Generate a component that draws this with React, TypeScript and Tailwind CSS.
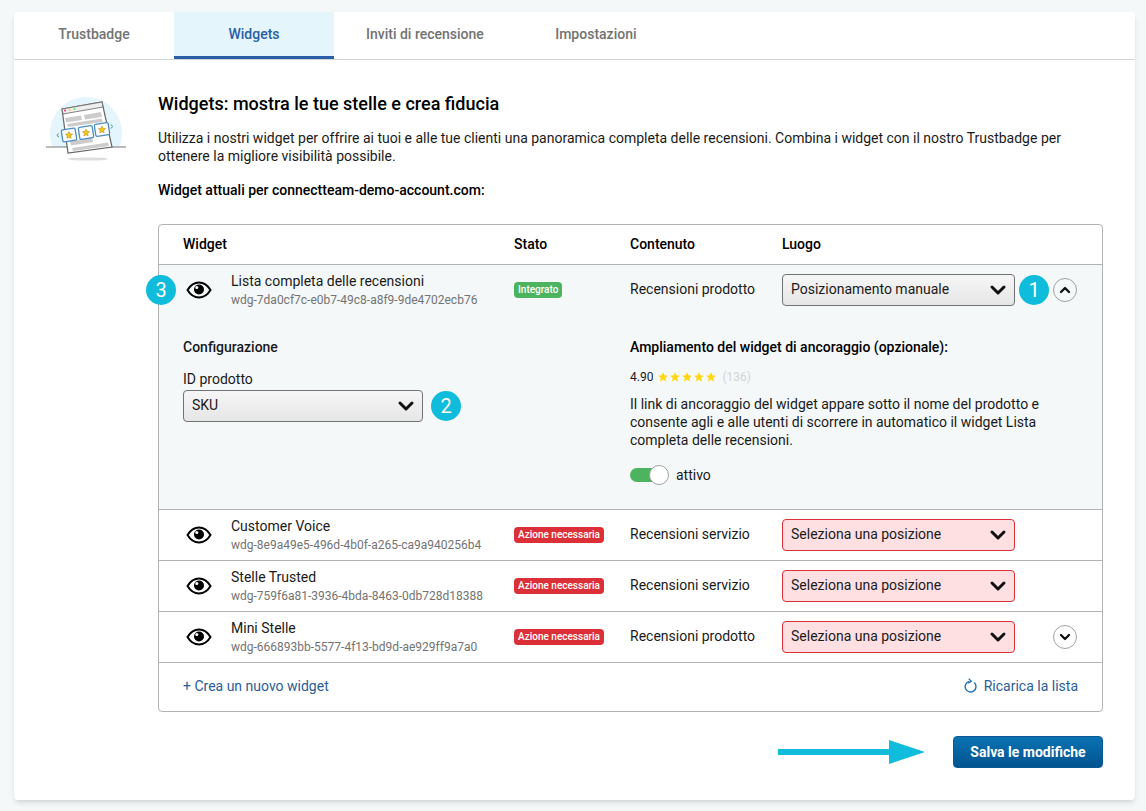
import { ChevronDown, ChevronUp } from "lucide-react";

const gridCols = "grid grid-cols-[331px_116px_152px_1fr]";

const Eye = () => (
  <svg viewBox="0 0 26 20" className="w-7 h-5 shrink-0" fill="none">
    <path d="M1.5 10C4.5 5 8.5 2.5 13 2.5S21.5 5 24.5 10C21.5 15 17.5 17.5 13 17.5S4.5 15 1.5 10Z" stroke="#000" strokeWidth="2" />
    <circle cx="13" cy="9.5" r="5" fill="#000" />
    <circle cx="10.8" cy="7.6" r="1.5" fill="#fff" />
  </svg>
);

const Bubble = ({ n }: { n: number }) => (
  <span className="flex items-center justify-center size-7.5 shrink-0 rounded-full bg-[#0fbcdc] text-xl text-white">{n}</span>
);

const Select = ({ label, error, wide }: { label: string; error?: boolean; wide?: boolean }) => (
  <div className={`flex items-center justify-between shrink-0 h-8 pl-2 pr-1 rounded border ${wide ? "w-60" : "w-[233px]"} ${error ? "border-[#dc3038] bg-[#ffe0e2]" : "border-neutral-500 bg-linear-to-b from-[#f6f6f6] to-[#e6e6e6]"}`}>
    <span className="pb-0.5">{label}</span>
    <ChevronDown className="size-6" strokeWidth={3} color="#111" />
  </div>
);

const Badge = ({ label, ok }: { label: string; ok?: boolean }) => (
  <span className={`inline-block w-fit h-4 px-1 rounded text-[10px] leading-4 font-medium text-white ${ok ? "bg-[#4cb35f]" : "bg-[#dc3038]"}`}>{label}</span>
);

const WidgetName = ({ name, id }: { name: string; id: string }) => (
  <div className="flex items-center gap-4.5 pl-0.5">
    <Eye />
    <div>
      <div className="leading-4.5">{name}</div>
      <div className="mt-0.5 text-xs leading-4 text-neutral-500">{id}</div>
    </div>
  </div>
);

const Row = ({ name, id, content, expand }: { name: string; id: string; content: string; expand?: boolean }) => (
  <div className={`${gridCols} items-center h-[51px] px-6 border-t border-[#b3b3b3]`}>
    <WidgetName name={name} id={id} />
    <Badge label="Azione necessaria" />
    <span className="pb-0.5">{content}</span>
    <div className="flex items-center justify-between">
      <Select label="Seleziona una posizione" error />
      {expand && (
        <span className="flex items-center justify-center size-6 mr-px rounded-full border border-neutral-400">
          <ChevronDown className="size-4" strokeWidth={3.5} color="#111" />
        </span>
      )}
    </div>
  </div>
);

const Illustration = () => (
  <svg viewBox="0 0 112 86" className="w-28 shrink-0 self-start" fill="none">
    <path d="M22.8 63A36 36 0 1 1 89.2 63Z" fill="#e4f5fb" />
    <path d="M16 63H96" stroke="#777" strokeWidth="1" />
    <ellipse cx="58" cy="75" rx="20" ry="1.6" fill="#ddd" />
    <g transform="translate(0 1)">
      <path d="M32 24L72 17L82 62L38 68Z" fill="#fff" stroke="#666" strokeWidth="1.2" />
      <path d="M32 24L72 17L73 22L33 29Z" fill="#eee" stroke="#666" strokeWidth="0.8" />
      <circle cx="35" cy="25.5" r="1" fill="#f27" />
      <circle cx="39.5" cy="24.7" r="1" fill="#fc3" />
      <circle cx="44.5" cy="24" r="1" fill="#6d6" />
      <path d="M35 33L51 30.5L52 35L36 37.5ZM54 30L71 27L72 32L55 34.5ZM37 39L72 33.5L72.5 37L38 42Z" fill="#ccc" />
      <path d="M40 56L62 52.5L63 57L41 60.5ZM42 63L78 57.5L79 61L43 66Z" fill="#ccc" />
      <g fill="#fff" stroke="#4a8cc4" strokeWidth="1.3">
        <rect x="32" y="44" width="14" height="12" rx="1.5" transform="rotate(-9 39 50)" />
        <rect x="49" y="41.5" width="14" height="12" rx="1.5" transform="rotate(-9 56 47.5)" />
        <rect x="65" y="38.5" width="14" height="12" rx="1.5" transform="rotate(-9 72 44.5)" />
      </g>
      <g fill="#f5c518" stroke="#8a7a20" strokeWidth="0.4">
        <path d="M39 46.5l1.1 2.3 2.5.3-1.8 1.8.4 2.5-2.2-1.2-2.2 1.2.4-2.5-1.8-1.8 2.5-.3Z" />
        <path d="M56 44l1.1 2.3 2.5.3-1.8 1.8.4 2.5-2.2-1.2-2.2 1.2.4-2.5-1.8-1.8 2.5-.3Z" />
        <path d="M72 41l1.1 2.3 2.5.3-1.8 1.8.4 2.5-2.2-1.2-2.2 1.2.4-2.5-1.8-1.8 2.5-.3Z" />
      </g>
      <path d="M28.5 48.5L27 50.5L29 52M81 39.5L82.5 41.5L81 43.5" stroke="#4a8cc4" strokeWidth="1" />
    </g>
  </svg>
);

const Star = () => (
  <svg viewBox="0 0 20 20" className="size-2.5" fill="#ffd814">
    <path d="M10 0.5l2.9 6.2 6.7.8-5 4.6 1.4 6.7L10 15.4l-6 3.4 1.4-6.7-5-4.6 6.7-.8Z" />
  </svg>
);

const tabClass = "flex items-center justify-center min-w-40 px-8 border-b-3";

export default function App() {
  return (
    <div className="min-h-screen bg-[#f4f8f9] pt-3 pb-2.5 pl-3.5 text-sm text-[#1a1a1a] font-['Roboto',sans-serif]">
      <div className="w-[1121px] bg-white rounded shadow-md">
        <div className="flex h-12 border-b border-neutral-300 font-medium text-neutral-500">
          <div className={`${tabClass} border-transparent`}>Trustbadge</div>
          <div className={`${tabClass} border-[#2a5ea8] bg-[#e4f5fb] text-[#2a5ea8]`}>Widgets</div>
          <div className={`${tabClass} border-transparent`}>Inviti di recensione</div>
          <div className={`${tabClass} border-transparent`}>Impostazioni</div>
        </div>

        <div className="flex gap-4 pl-4 pr-8 pt-6 pb-8">
          <Illustration />
          <div className="flex-1 min-w-0 pt-2">
            <h1 className="pb-px text-lg leading-6 font-medium text-black">Widgets: mostra le tue stelle e crea fiducia</h1>
            <p className="mt-3 leading-4.5">
              Utilizza i nostri widget per offrire ai tuoi e alle tue clienti una panoramica completa delle recensioni. Combina i widget con il nostro Trustbadge per ottenere la migliore visibilità possibile.
            </p>
            <p className="mt-4 pb-px leading-4.5 font-medium text-black">Widget attuali per connectteam-demo-account.com:</p>

            <div className="mt-6 rounded border border-[#b3b3b3]">
              <div className={`${gridCols} items-center h-[39px] pb-0.5 px-6 font-medium text-black`}>
                <span>Widget</span>
                <span>Stato</span>
                <span>Contenuto</span>
                <span>Luogo</span>
              </div>

              <div className="relative border-t border-[#b3b3b3] bg-[#f4f8f9] px-6 pb-6">
                <div className="absolute left-[-13px] top-2.5">
                  <Bubble n={3} />
                </div>
                <div className={`${gridCols} items-center h-[50px]`}>
                  <WidgetName name="Lista completa delle recensioni" id="wdg-7da0cf7c-e0b7-49c8-a8f9-9de4702ecb76" />
                  <Badge label="Integrato" ok />
                  <span className="pb-0.5">Recensioni prodotto</span>
                  <div className="flex items-center gap-1">
                    <Select label="Posizionamento manuale" />
                    <Bubble n={1} />
                    <span className="flex items-center justify-center size-6 rounded-full border border-neutral-400">
                      <ChevronUp className="size-4" strokeWidth={3.5} color="#111" />
                    </span>
                  </div>
                </div>
                <div className={`${gridCols} pt-5`}>
                  <div className="col-span-2">
                    <h3 className="font-medium leading-6">Configurazione</h3>
                    <div className="mt-2.5 leading-5">ID prodotto</div>
                    <div className="flex items-center gap-2 mt-px">
                      <Select label="SKU" wide />
                      <Bubble n={2} />
                    </div>
                  </div>
                  <div className="col-span-2">
                    <h3 className="font-medium leading-6 text-black">Ampliamento del widget di ancoraggio (opzionale):</h3>
                    <div className="flex items-center gap-1 mt-2 h-5 text-xs">
                      4.90
                      <span className="flex gap-0.5 ml-px">
                        <Star />
                        <Star />
                        <Star />
                        <Star />
                        <Star />
                      </span>
                      <span className="ml-0.5 text-neutral-300">(136)</span>
                    </div>
                    <p className="mt-2 leading-4.5">
                      Il link di ancoraggio del widget appare sotto il nome del prodotto e consente agli e alle utenti di scorrere in automatico il widget Lista completa delle recensioni.
                    </p>
                    <div className="flex items-center gap-2.5 mt-4 h-5">
                      <span className="relative block w-9 h-3.5 rounded-full bg-[#4cb35f]">
                        <span className="absolute right-[-3px] top-[-3px] size-5 rounded-full border border-neutral-400 bg-white" />
                      </span>
                      <span>attivo</span>
                    </div>
                  </div>
                </div>
              </div>

              <Row name="Customer Voice" id="wdg-8e9a49e5-496d-4b0f-a265-ca9a940256b4" content="Recensioni servizio" />
              <Row name="Stelle Trusted" id="wdg-759f6a81-3936-4bda-8463-0db728d18388" content="Recensioni servizio" />
              <Row name="Mini Stelle" id="wdg-666893bb-5577-4f13-bd9d-ae929ff9a7a0" content="Recensioni prodotto" expand />

              <div className="flex items-center justify-between pt-3.5 pb-4 px-6 leading-4.5 border-t border-[#b3b3b3] text-[#2a5d9a]">
                <span>+ Crea un nuovo widget</span>
                <span className="flex items-center gap-1.5">
                  <svg viewBox="0 0 14 16" className="w-3.5 h-4" fill="none" stroke="#2a72ad" strokeWidth="1.4">
                    <path d="M5.2 3.4A5.4 5.4 0 1 0 10.2 4.6" />
                    <path d="M4.8 0.6L7.2 3.3L4.2 5.2" />
                  </svg>
                  Ricarica la lista
                </span>
              </div>
            </div>

            <div className="flex items-center justify-end gap-7 mt-6">
              <svg viewBox="0 0 147 24" className="w-[147px] h-6" fill="#0fbcdc">
                <path d="M0 9H111V0L147 12L111 24V15H0Z" />
              </svg>
              <button className="h-8 w-[150px] rounded border border-[#0a5a90] bg-linear-to-b from-[#0b72b2] to-[#025490] font-bold text-white">
                Salva le modifiche
              </button>
            </div>
          </div>
        </div>
      </div>
    </div>
  );
}
